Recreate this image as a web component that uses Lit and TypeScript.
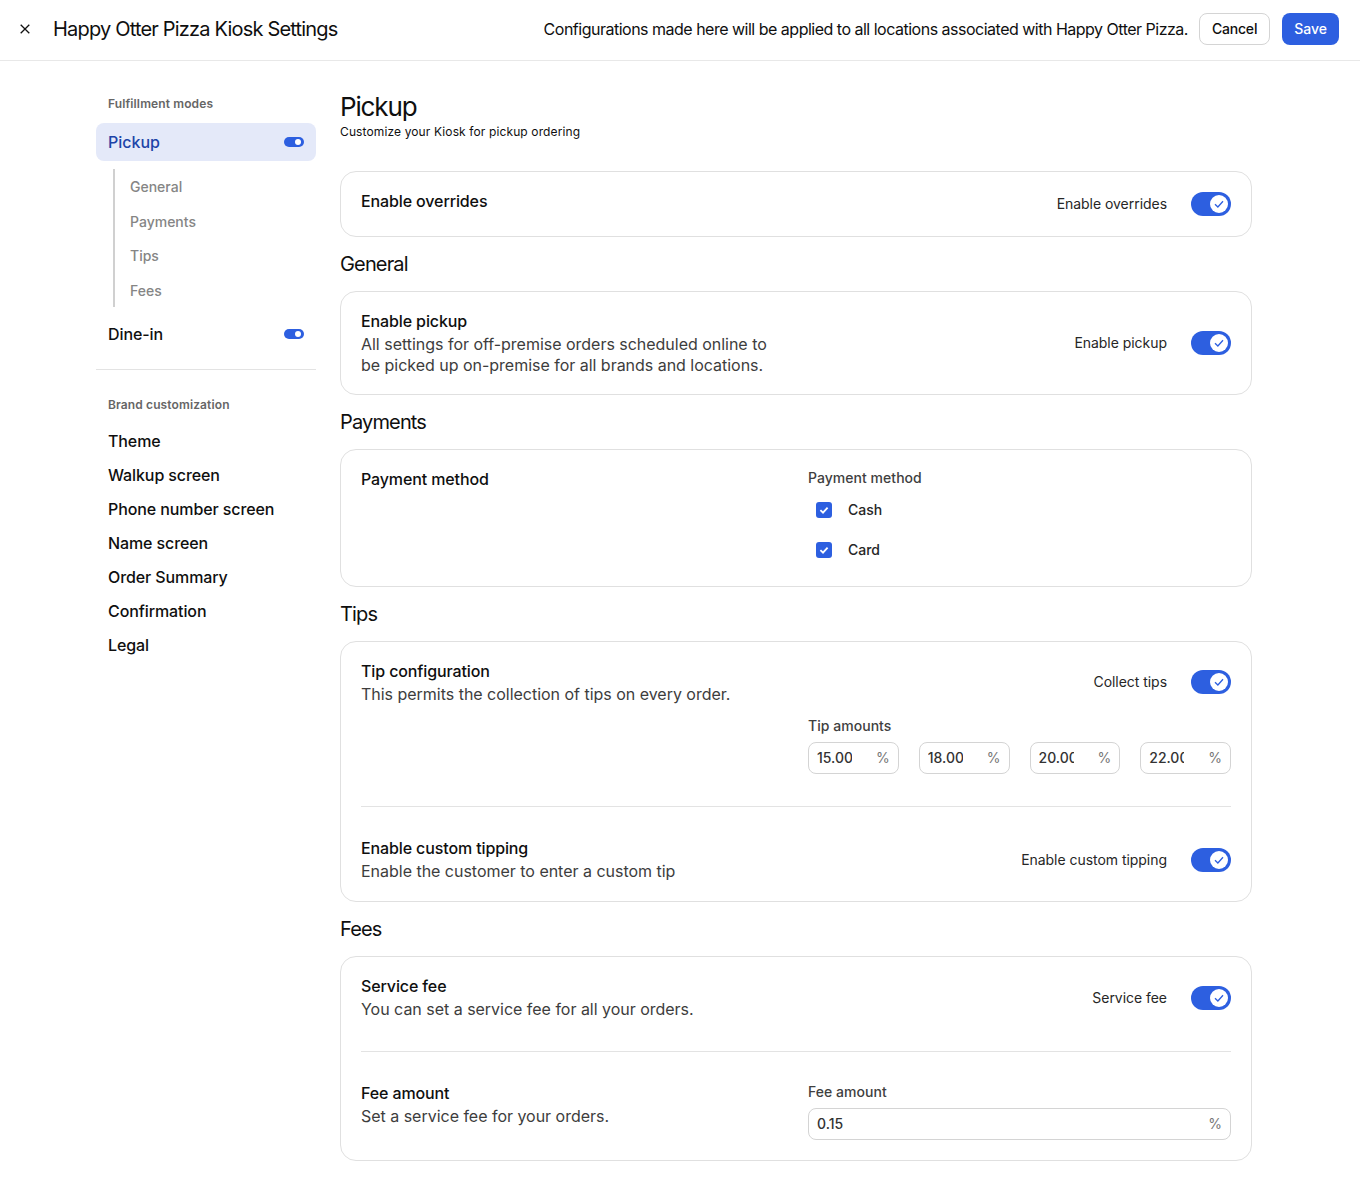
import { LitElement, html, css } from "lit";
import { customElement } from "lit/decorators.js";

const toggle = html`<span class="toggle"><span class="knob"><svg viewBox="0 0 12 12" width="12" height="12"><path d="M2 6.2 4.9 9 10 3.3" fill="none" stroke="#2d5fe0" stroke-width="1.3"/></svg></span></span>`;
const mini = html`<span class="mini"><span class="mini-knob"></span></span>`;
const check = html`<span class="check"><svg viewBox="0 0 16 16" width="16" height="16"><path d="M4.4 8.2 7 10.7 11.6 5.6" fill="none" stroke="#fff" stroke-width="1.8"/></svg></span>`;

const field = (v: string) => html`<div class="field"><input .value=${v} /><span class="suffix">%</span></div>`;

@customElement("app-root")
export class AppRoot extends LitElement {
  static styles = css`
    :host { display: block; font-family: Inter, "Liberation Sans", sans-serif; color: #0f0f0f; background: #fff; min-height: 1183px; }
    * { box-sizing: border-box; }
    header { height: 61px; border-bottom: 1px solid #e8e8e8; display: flex; align-items: center; padding: 0 21px 3px 18px; }
    .close { width: 14px; height: 14px; display: block; margin-right: 21px; }
    h1 { font-size: 20px; line-height: 28px; font-weight: 400; margin: 0; flex: 1; letter-spacing: -0.81px; }
    .note { font-size: 16px; line-height: 24px; font-weight: 400; letter-spacing: -0.5px; margin-right: 11px; }
    .btn { height: 32px; border-radius: 8px; font: 500 14px/20px Inter, sans-serif; padding: 0 12px; display: flex; align-items: center; }
    .cancel { border: 1px solid #d4d4d4; background: #fff; color: #0f0f0f; margin-right: 12px; letter-spacing: -0.2px; }
    .save { background: #2d5fe0; color: #fff; }
    .page { display: flex; padding: 0 108px 22px 96px; gap: 24px; align-items: flex-start; }
    nav { width: 220px; flex: none; padding-top: 35px; }
    .cap { font-size: 12px; line-height: 16px; font-weight: 600; color: #666; padding: 0 12px; letter-spacing: 0.12px; }
    .mode { height: 38px; border-radius: 8px; display: flex; align-items: center; justify-content: space-between; padding: 0 12px; font-size: 16px; font-weight: 500; margin-top: 11px; }
    .mode.on { background: #e4e9f9; color: #1d44a8; }
    .mini { width: 20px; height: 10px; border-radius: 5px; background: #2d5fe0; display: block; position: relative; }
    .mini-knob { position: absolute; width: 6px; height: 6px; border-radius: 50%; background: #fff; right: 3px; top: 2px; }
    .subs { margin: 8px 0 8px 17px; border-left: 2px solid #d0d0d0; padding: 1px 0 0 15px; display: flex; flex-direction: column; height: 138px; }
    .subs span { font-size: 14px; line-height: 34.5px; font-weight: 500; color: #858585; }
    .dine { margin-top: 0; letter-spacing: -0.1px; }
    .rule { border-top: 1px solid #e3e3e3; margin: 16px 0 27px; }
    .brand { display: flex; flex-direction: column; margin-top: 11px; }
    .brand span { font-size: 16px; line-height: 34px; font-weight: 500; padding: 0 12px; letter-spacing: -0.1px; }
    main { flex: 1; padding-top: 31px; }
    h2 { font-size: 26px; line-height: 30px; font-weight: 400; margin: 0; letter-spacing: -1.15px; }
    .lead { font-size: 12px; line-height: 16px; font-weight: 400; margin: 2px 0 31px; letter-spacing: 0.12px; }
    h3 { font-size: 20px; line-height: 28px; font-weight: 400; margin: 13px 0 13px; letter-spacing: -0.85px; }
    .card { border: 1px solid #e0e0e0; border-radius: 16px; padding: 20px; }
    .row { display: flex; align-items: center; justify-content: space-between; gap: 24px; }
    .row.top { align-items: flex-start; }
    .title { font-size: 16px; line-height: 18px; font-weight: 500; letter-spacing: -0.12px; }
    .desc { font-size: 16px; line-height: 20px; color: #3d3d3d; max-width: 423px; margin-top: 4px; letter-spacing: -0.02px; }
    .desc.two { line-height: 21px; margin-bottom: -2px; }
    .ctl { display: flex; align-items: center; gap: 24px; font-size: 14px; line-height: 20px; font-weight: 400; color: #262626; letter-spacing: -0.04px; }
    .ctl.raised { margin-bottom: 2px; }
    .toggle { width: 40px; height: 24px; border-radius: 12px; background: #2d5fe0; display: block; position: relative; }
    .knob { position: absolute; width: 18px; height: 18px; top: 3px; right: 3px; border-radius: 50%; background: #fff; display: flex; align-items: center; justify-content: center; }
    .grid { display: grid; grid-template-columns: 1fr 1fr; gap: 24px; }
    .label { font-size: 14px; line-height: 16px; font-weight: 500; color: #404040; margin-bottom: 8px; letter-spacing: 0.04px; }
    .opt { height: 32px; display: flex; align-items: center; gap: 16px; padding-left: 8px; font-size: 14px; line-height: 20px; font-weight: 500; color: #262626; }
    .opts { display: flex; flex-direction: column; gap: 8px; }
    .check { width: 16px; height: 16px; border-radius: 3px; background: #2d5fe0; display: block; }
    .check svg { display: block; }
    .tips { display: grid; grid-template-columns: 423px; justify-content: end; margin-top: 14px; }
    .inputs { display: grid; grid-template-columns: repeat(4, 1fr); gap: 20px; }
    .field { height: 32px; border: 1px solid #d4d4d4; border-radius: 8px; padding: 0 8px; display: flex; align-items: center; gap: 24px; }
    .field input { flex: 1; min-width: 0; width: 100%; border: 0; outline: 0; padding: 0; background: none; font: 500 14px/20px Inter, sans-serif; color: #333; }
    .suffix { font-size: 14px; line-height: 20px; color: #777; flex: none; }
    hr { border: 0; border-top: 1px solid #e3e3e3; margin: 32px 0; }
  `;

  render() {
    return html`
      <header>
        <svg class="close" viewBox="0 0 14 14"><path d="M2.7 2.7 11.3 11.3M11.3 2.7 2.7 11.3" stroke="#111" stroke-width="1.3" fill="none"/></svg>
        <h1>Happy Otter Pizza Kiosk Settings</h1>
        <span class="note">Configurations made here will be applied to all locations associated with Happy Otter Pizza.</span>
        <span class="btn cancel">Cancel</span>
        <span class="btn save">Save</span>
      </header>
      <div class="page">
        <nav>
          <div class="cap">Fulfillment modes</div>
          <div class="mode on">Pickup ${mini}</div>
          <div class="subs"><span>General</span><span>Payments</span><span>Tips</span><span>Fees</span></div>
          <div class="mode dine">Dine-in ${mini}</div>
          <div class="rule"></div>
          <div class="cap">Brand customization</div>
          <div class="brand">
            ${["Theme","Walkup screen","Phone number screen","Name screen","Order Summary","Confirmation","Legal"].map((s) => html`<span>${s}</span>`)}
          </div>
        </nav>
        <main>
          <h2>Pickup</h2>
          <div class="lead">Customize your Kiosk for pickup ordering</div>
          <section class="card">
            <div class="row top"><div class="title">Enable overrides</div><div class="ctl">Enable overrides ${toggle}</div></div>
          </section>
          <h3>General</h3>
          <section class="card">
            <div class="row"><div><div class="title">Enable pickup</div><div class="desc two">All settings for off-premise orders scheduled online to be picked up on-premise for all brands and locations.</div></div><div class="ctl">Enable pickup ${toggle}</div></div>
          </section>
          <h3>Payments</h3>
          <section class="card">
            <div class="grid">
              <div class="title">Payment method</div>
              <div>
                <div class="label">Payment method</div>
                <div class="opts">
                  <div class="opt">${check} Cash</div>
                  <div class="opt">${check} Card</div>
                </div>
              </div>
            </div>
          </section>
          <h3>Tips</h3>
          <section class="card">
            <div class="row"><div><div class="title">Tip configuration</div><div class="desc">This permits the collection of tips on every order.</div></div><div class="ctl raised">Collect tips ${toggle}</div></div>
            <div class="tips"><div>
              <div class="label">Tip amounts</div>
              <div class="inputs">${["15.00","18.00","20.00","22.00"].map(field)}</div>
            </div></div>
            <hr />
            <div class="row"><div><div class="title">Enable custom tipping</div><div class="desc">Enable the customer to enter a custom tip</div></div><div class="ctl">Enable custom tipping ${toggle}</div></div>
          </section>
          <h3>Fees</h3>
          <section class="card">
            <div class="row"><div><div class="title">Service fee</div><div class="desc">You can set a service fee for all your orders.</div></div><div class="ctl">Service fee ${toggle}</div></div>
            <hr />
            <div class="grid">
              <div><div class="title">Fee amount</div><div class="desc">Set a service fee for your orders.</div></div>
              <div><div class="label">Fee amount</div>${field("0.15")}</div>
            </div>
          </section>
        </main>
      </div>
    `;
  }
}
